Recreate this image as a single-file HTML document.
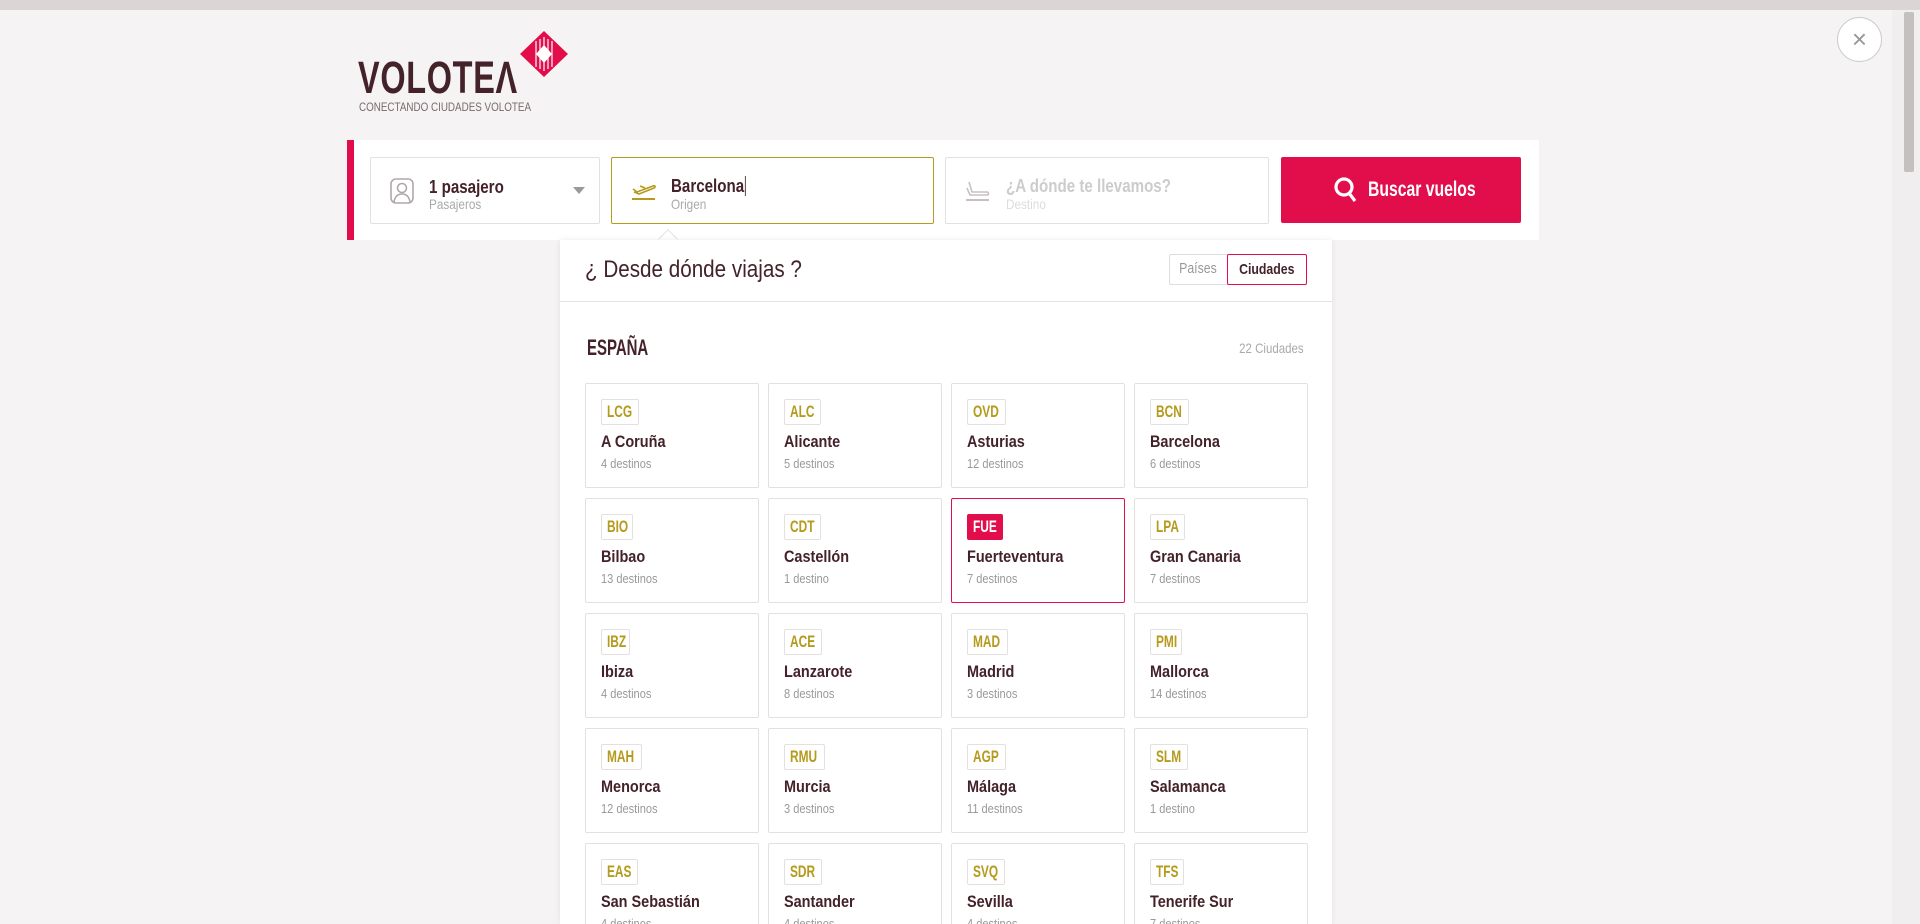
<!DOCTYPE html>
<html><head><meta charset="utf-8"><style>
*{box-sizing:border-box;margin:0;padding:0}
html{overflow:hidden;width:1920px;height:924px}
body{width:1920px;height:924px;overflow:hidden;background:#f5f3f3;font-family:"Liberation Sans Narrow","Liberation Sans",sans-serif;color:#44222a;position:relative}
.abs{position:absolute}
.sx{display:inline-block;transform-origin:left center;white-space:nowrap}
.topbar{left:0;top:0;width:1920px;height:10px;background:#dbd5d5}
.scroll{left:1892px;top:10px;width:28px;height:914px;background:#f0eeee}
.thumb{left:1904px;top:12px;width:10px;height:160px;background:#c4c0c0;border-radius:2px}
.close{left:1837px;top:17px;width:45px;height:45px;border:1px solid #ccc;border-radius:50%;background:#fff;color:#999;font-size:26px;text-align:center;line-height:42px;font-family:"Liberation Sans",sans-serif}
.logo{left:358px;top:52px;font-size:45px;font-weight:bold;letter-spacing:1px;color:#44222a;transform:scaleX(.72)}
.tag{left:359px;top:100px;font-size:12px;color:#7a6a6a;transform:scaleX(.82)}
.panel{left:347px;top:140px;width:1192px;height:100px;background:#fff;border-left:7px solid #e20e4b}
.box{top:157px;height:67px;background:#fff;border:1px solid #e4e0e0;border-radius:2px}
.main{font-size:18px;font-weight:bold;color:#44222a;transform:scaleX(.84)}
.sub{font-size:14px;color:#aaa;transform:scaleX(.84)}
.btn{left:1281px;top:157px;width:240px;height:66px;background:#e20e4b;border-radius:2px;color:#fff;font-size:21px;font-weight:bold;display:flex;align-items:center;justify-content:center}
.btn span{display:inline-block;transform:scaleX(.75);transform-origin:left center;width:100px;white-space:nowrap}
.drop{left:560px;top:240px;width:772px;height:684px;background:#fff;box-shadow:0 0 6px rgba(0,0,0,.08)}
.cards{left:585px;top:383px;display:grid;grid-template-columns:repeat(4,174px);grid-auto-rows:105px;column-gap:9px;row-gap:10px}
.card{border:1px solid #e4e0e0;border-radius:2px;padding:15px 0 0 15px;background:#fff;overflow:hidden}
.code{display:inline-block;border:1px solid #e4e0e0;border-radius:2px;color:#b59a1c;font-weight:bold;font-size:17px;padding:0 5px;height:26px;line-height:24px}
.code b{display:inline-block;transform:scaleX(.7);transform-origin:left center;margin-right:-10px}
.nm{font-size:17px;font-weight:bold;margin-top:7px;color:#44222a;transform:scaleX(.85);transform-origin:left;white-space:nowrap}
.ds{font-size:13px;color:#999;margin-top:4px;transform:scaleX(.85);transform-origin:left;white-space:nowrap}
.sel{border-color:#e20e4b}
.sel .code{background:#e20e4b;color:#fff;border-color:#e20e4b}
</style></head><body>
<div class="abs topbar"></div>
<div class="abs scroll"></div><div class="abs thumb"></div>
<div class="abs close">×</div>
<div class="abs logo sx">VOLOTEΛ</div>
<svg class="abs" style="left:520px;top:31px" width="48" height="46" viewBox="0 0 48 46"><polygon points="24,0 48,23 24,46 0,23" fill="#e20e4b"/><g stroke="#fff" stroke-width="1.2"><line x1="16" y1="10" x2="16" y2="36"/><line x1="20" y1="8" x2="20" y2="38"/><line x1="24" y1="6" x2="24" y2="40"/><line x1="28" y1="8" x2="28" y2="38"/><line x1="32" y1="10" x2="32" y2="36"/></g><polygon points="24,14 32,23 24,32 16,23" fill="#fff"/></svg>
<div class="abs tag sx">CONECTANDO CIUDADES VOLOTEA</div>
<div class="abs panel"></div>
<div class="abs box" style="left:370px;width:230px"></div>
<svg class="abs" style="left:390px;top:178px" width="24" height="26" viewBox="0 0 24 26" fill="none" stroke="#b0a8a8" stroke-width="1.6"><rect x="1" y="1" width="22" height="24" rx="5"/><circle cx="12" cy="10" r="4.5"/><path d="M4 24c1-6 4-8 8-8s7 2 8 8"/></svg>
<div class="abs main sx" style="left:429px;top:177px">1 pasajero</div>
<div class="abs sub sx" style="left:429px;top:196px">Pasajeros</div>
<div class="abs" style="left:573px;top:187px;border-left:6px solid transparent;border-right:6px solid transparent;border-top:7px solid #999"></div>
<div class="abs box" style="left:611px;width:323px;border-color:#b59a1c"></div>
<svg class="abs" style="left:631px;top:181px" width="26" height="20" viewBox="0 0 26 20" fill="none" stroke="#b59a1c" stroke-width="1.6"><path d="M2 8l4 3 16-6c2-1 3 1 1 2L8 13 3 11"/><path d="M9 5l5 2"/><line x1="1" y1="18" x2="24" y2="18" stroke-width="2"/></svg>
<div class="abs main sx" style="left:671px;top:176px">Barcelona<span style="border-left:1px solid #44222a;margin-left:1px"></span></div>
<div class="abs sub sx" style="left:671px;top:196px">Origen</div>
<div class="abs" style="left:661px;top:232px;width:14px;height:14px;background:#fff;border-left:1px solid #e4e0e0;border-top:1px solid #e4e0e0;transform:rotate(45deg)"></div>
<div class="abs box" style="left:945px;width:324px"></div>
<svg class="abs" style="left:965px;top:180px" width="26" height="22" viewBox="0 0 26 22" fill="none" stroke="#c8c0c0" stroke-width="1.6"><path d="M4 2l3 10h15c2 0 2 3 0 3H5L2 8"/><line x1="1" y1="20" x2="24" y2="20" stroke-width="2"/></svg>
<div class="abs main sx" style="left:1006px;top:176px;color:#ccc">¿A dónde te llevamos?</div>
<div class="abs sub sx" style="left:1006px;top:196px;color:#ddd">Destino</div>
<div class="abs btn"><svg width="24" height="26" viewBox="0 0 24 26" fill="none" stroke="#fff" stroke-width="3.2" style="margin-right:10px"><circle cx="10" cy="10" r="8"/><line x1="15" y1="16" x2="21" y2="24"/></svg><span>Buscar vuelos</span></div>
<div class="abs drop"></div>
<div class="abs sx" style="left:585px;top:256px;font-size:24px;color:#44222a;font-family:'Liberation Sans',sans-serif;transform:scaleX(.86)">¿ Desde dónde viajas ?</div>
<div class="abs" style="left:1169px;top:254px;width:138px;height:31px;border:1px solid #ddd;border-radius:2px;background:#fff"></div>
<div class="abs" style="left:1169px;top:254px;width:58px;height:31px;font-size:15px;color:#999;text-align:center;line-height:30px"><span class="sx" style="transform:scaleX(.82);transform-origin:center">Países</span></div>
<div class="abs" style="left:1227px;top:254px;width:80px;height:31px;border:1px solid #e20e4b;border-radius:2px;font-size:15px;font-weight:bold;text-align:center;line-height:29px"><span class="sx" style="transform:scaleX(.82);transform-origin:center">Ciudades</span></div>
<div class="abs" style="left:560px;top:301px;width:772px;height:1px;background:#e6e2e2"></div>
<div class="abs sx" style="left:587px;top:335px;font-size:22px;font-weight:bold;transform:scaleX(.68)">ESPAÑA</div>
<div class="abs" style="left:1200px;top:340px;width:104px;text-align:right;font-size:14px;color:#aaa"><span class="sx" style="transform:scaleX(.82);transform-origin:right center">22 Ciudades</span></div>
<div class="abs cards">
<div class="card"><span class="code"><b>LCG</b></span><div class="nm">A Coruña</div><div class="ds">4 destinos</div></div>
<div class="card"><span class="code"><b>ALC</b></span><div class="nm">Alicante</div><div class="ds">5 destinos</div></div>
<div class="card"><span class="code"><b>OVD</b></span><div class="nm">Asturias</div><div class="ds">12 destinos</div></div>
<div class="card"><span class="code"><b>BCN</b></span><div class="nm">Barcelona</div><div class="ds">6 destinos</div></div>
<div class="card"><span class="code"><b>BIO</b></span><div class="nm">Bilbao</div><div class="ds">13 destinos</div></div>
<div class="card"><span class="code"><b>CDT</b></span><div class="nm">Castellón</div><div class="ds">1 destino</div></div>
<div class="card sel"><span class="code"><b>FUE</b></span><div class="nm">Fuerteventura</div><div class="ds">7 destinos</div></div>
<div class="card"><span class="code"><b>LPA</b></span><div class="nm">Gran Canaria</div><div class="ds">7 destinos</div></div>
<div class="card"><span class="code"><b>IBZ</b></span><div class="nm">Ibiza</div><div class="ds">4 destinos</div></div>
<div class="card"><span class="code"><b>ACE</b></span><div class="nm">Lanzarote</div><div class="ds">8 destinos</div></div>
<div class="card"><span class="code"><b>MAD</b></span><div class="nm">Madrid</div><div class="ds">3 destinos</div></div>
<div class="card"><span class="code"><b>PMI</b></span><div class="nm">Mallorca</div><div class="ds">14 destinos</div></div>
<div class="card"><span class="code"><b>MAH</b></span><div class="nm">Menorca</div><div class="ds">12 destinos</div></div>
<div class="card"><span class="code"><b>RMU</b></span><div class="nm">Murcia</div><div class="ds">3 destinos</div></div>
<div class="card"><span class="code"><b>AGP</b></span><div class="nm">Málaga</div><div class="ds">11 destinos</div></div>
<div class="card"><span class="code"><b>SLM</b></span><div class="nm">Salamanca</div><div class="ds">1 destino</div></div>
<div class="card"><span class="code"><b>EAS</b></span><div class="nm">San Sebastián</div><div class="ds">4 destinos</div></div>
<div class="card"><span class="code"><b>SDR</b></span><div class="nm">Santander</div><div class="ds">4 destinos</div></div>
<div class="card"><span class="code"><b>SVQ</b></span><div class="nm">Sevilla</div><div class="ds">4 destinos</div></div>
<div class="card"><span class="code"><b>TFS</b></span><div class="nm">Tenerife Sur</div><div class="ds">7 destinos</div></div>
</div>
</body></html>
